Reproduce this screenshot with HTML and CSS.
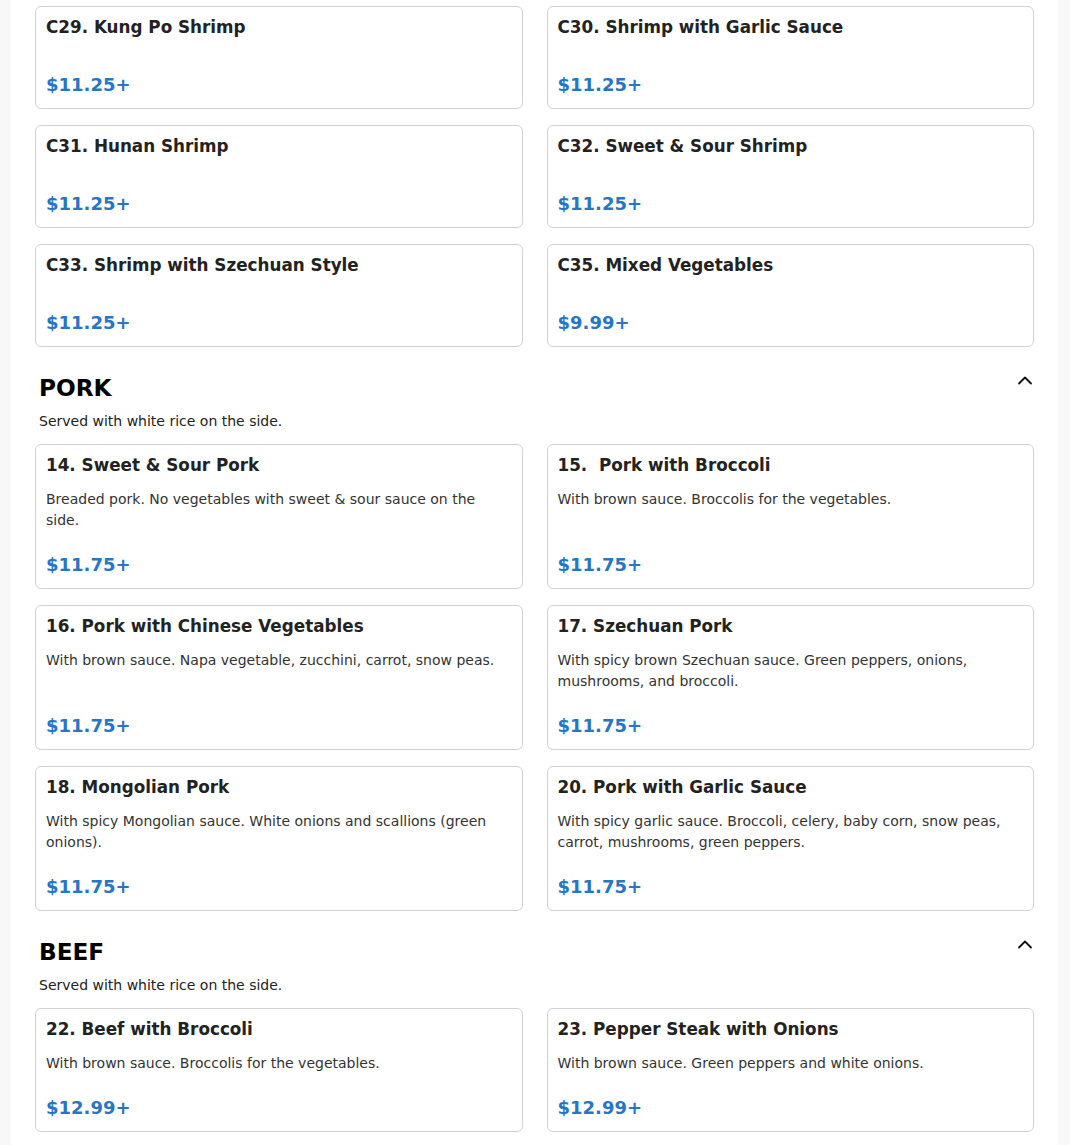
FILE: index.html
```html
<!DOCTYPE html>
<html lang="en">
<head>
<meta charset="utf-8">
<title>Menu</title>
<link rel="stylesheet" href="styles.css">
</head>
<body>
<main class="page">
  <div class="grid">
    <div class="card"><div class="title">C29. Kung Po Shrimp</div><div class="price">$11.25+</div></div>
    <div class="card"><div class="title">C30. Shrimp with Garlic Sauce</div><div class="price">$11.25+</div></div>
    <div class="card"><div class="title">C31. Hunan Shrimp</div><div class="price">$11.25+</div></div>
    <div class="card"><div class="title">C32. Sweet &amp; Sour Shrimp</div><div class="price">$11.25+</div></div>
    <div class="card"><div class="title">C33. Shrimp with Szechuan Style</div><div class="price">$11.25+</div></div>
    <div class="card"><div class="title">C35. Mixed Vegetables</div><div class="price">$9.99+</div></div>
  </div>

  <section class="section">
    <div class="section-head">
      <h2 class="section-title">PORK</h2>
      <button class="toggle" aria-label="Collapse">
        <svg width="16" height="16" viewBox="0 0 16 16"><path d="M2 9.5 L8 3.5 L14 9.5" fill="none" stroke="#111" stroke-width="1.8" stroke-linecap="round" stroke-linejoin="round"/></svg>
      </button>
    </div>
    <p class="section-note">Served with white rice on the side.</p>
    <div class="grid">
      <div class="card"><div class="title">14. Sweet &amp; Sour Pork</div><div class="desc">Breaded pork. No vegetables with sweet &amp; sour sauce on the side.</div><div class="price">$11.75+</div></div>
      <div class="card"><div class="title">15.&nbsp; Pork with Broccoli</div><div class="desc">With brown sauce. Broccolis for the vegetables.</div><div class="price">$11.75+</div></div>
      <div class="card"><div class="title">16. Pork with Chinese Vegetables</div><div class="desc">With brown sauce. Napa vegetable, zucchini, carrot, snow peas.</div><div class="price">$11.75+</div></div>
      <div class="card"><div class="title">17. Szechuan Pork</div><div class="desc">With spicy brown Szechuan sauce. Green peppers, onions, mushrooms, and broccoli.</div><div class="price">$11.75+</div></div>
      <div class="card"><div class="title">18. Mongolian Pork</div><div class="desc">With spicy Mongolian sauce. White onions and scallions (green onions).</div><div class="price">$11.75+</div></div>
      <div class="card"><div class="title">20. Pork with Garlic Sauce</div><div class="desc">With spicy garlic sauce. Broccoli, celery, baby corn, snow peas, carrot, mushrooms, green peppers.</div><div class="price">$11.75+</div></div>
    </div>
  </section>

  <section class="section">
    <div class="section-head">
      <h2 class="section-title">BEEF</h2>
      <button class="toggle" aria-label="Collapse">
        <svg width="16" height="16" viewBox="0 0 16 16"><path d="M2 9.5 L8 3.5 L14 9.5" fill="none" stroke="#111" stroke-width="1.8" stroke-linecap="round" stroke-linejoin="round"/></svg>
      </button>
    </div>
    <p class="section-note">Served with white rice on the side.</p>
    <div class="grid">
      <div class="card"><div class="title">22. Beef with Broccoli</div><div class="desc">With brown sauce. Broccolis for the vegetables.</div><div class="price">$12.99+</div></div>
      <div class="card"><div class="title">23. Pepper Steak with Onions</div><div class="desc">With brown sauce. Green peppers and white onions.</div><div class="price">$12.99+</div></div>
    </div>
  </section>
</main>
</body>
</html>
```

FILE: styles.css
```css
html, body {
  margin: 0;
  padding: 0;
  background: #f8f8f8;
}

body {
  font-family: "DejaVu Sans", "Liberation Sans", sans-serif;
  color: #222;
}

.page {
  background: #ffffff;
  margin: 0 12px 0 11px;
  padding: 6px 24px 40px;
  min-height: 100vh;
  box-sizing: border-box;
}

.grid {
  display: grid;
  grid-template-columns: 1fr 1fr;
  column-gap: 24px;
  row-gap: 16px;
}

.card {
  display: flex;
  flex-direction: column;
  border: 1px solid #d2d2d2;
  border-radius: 6px;
  padding: 10px 10px 13px;
  background: #fff;
}

.title {
  font-size: 16.8px;
  font-weight: bold;
  line-height: 21px;
  color: #222;
  margin-bottom: 13px;
}

.desc {
  font-size: 14px;
  line-height: 21px;
  color: #333;
}

.price {
  margin-top: auto;
  padding-top: 23px;
  font-size: 18px;
  font-weight: bold;
  line-height: 21px;
  color: #2775c5;
}

.section {
  margin-top: 27px;
}

.section-head {
  display: flex;
  justify-content: space-between;
  align-items: flex-start;
  padding: 0 1px 0 4px;
}

.section-title {
  margin: 0;
  font-size: 23.2px;
  line-height: 28px;
  font-weight: bold;
  color: #000;
}

.toggle {
  border: none;
  background: none;
  padding: 0;
  margin: 0;
  width: 16px;
  height: 16px;
  cursor: pointer;
  display: block;
}

.toggle svg {
  display: block;
}

.section-note {
  margin: 9px 0 12px;
  padding-left: 4px;
  font-size: 14px;
  line-height: 21px;
  color: #222;
}
```
